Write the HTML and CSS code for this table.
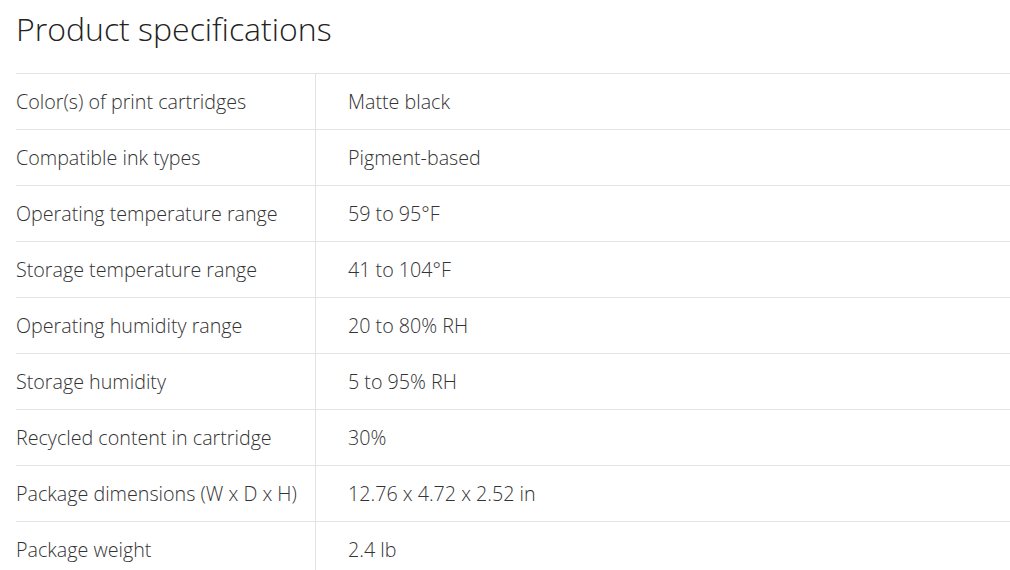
FILE: index.html
```html
<!DOCTYPE html>
<html>
<head>
<meta charset="utf-8">
<link rel="stylesheet" href="styles.css">
</head>
<body>
<section class="specs">
  <h2 class="specs-title">Product specifications</h2>
  <div class="specs-table">
    <div class="row"><div class="label">Color(s) of print cartridges</div><div class="value">Matte black</div></div>
    <div class="row"><div class="label">Compatible ink types</div><div class="value">Pigment-based</div></div>
    <div class="row"><div class="label">Operating temperature range</div><div class="value">59 to 95°F</div></div>
    <div class="row"><div class="label">Storage temperature range</div><div class="value">41 to 104°F</div></div>
    <div class="row"><div class="label">Operating humidity range</div><div class="value">20 to 80% RH</div></div>
    <div class="row"><div class="label">Storage humidity</div><div class="value">5 to 95% RH</div></div>
    <div class="row"><div class="label">Recycled content in cartridge</div><div class="value">30%</div></div>
    <div class="row"><div class="label">Package dimensions (W x D x H)</div><div class="value">12.76 x 4.72 x 2.52 in</div></div>
    <div class="row"><div class="label">Package weight</div><div class="value">2.4 lb</div></div>
  </div>
</section>
</body>
</html>
```
FILE: styles.css
```css
html, body {
  margin: 0;
  padding: 0;
  background: #fff;
}
body {
  font-family: "Open Sans", "Liberation Sans", sans-serif;
  color: #333;
}
.specs {
  padding-left: 16px;
}
.specs-title {
  margin: 0;
  padding-top: 8px;
  height: 73px;
  box-sizing: border-box;
  font-size: 32px;
  font-weight: 300;
  line-height: 42px;
  color: #222;
}
.specs-table {
  border-top: 1px solid #e3e3e3;
}
.row {
  display: grid;
  grid-template-columns: 300px 1fr;
  height: 55px;
  border-bottom: 1px solid #e3e3e3;
  font-size: 19.7px;
  font-weight: 300;
}
.label {
  display: flex;
  align-items: center;
  border-right: 1px solid #e3e3e3;
}
.value {
  display: flex;
  align-items: center;
  padding-left: 32px;
}
```
